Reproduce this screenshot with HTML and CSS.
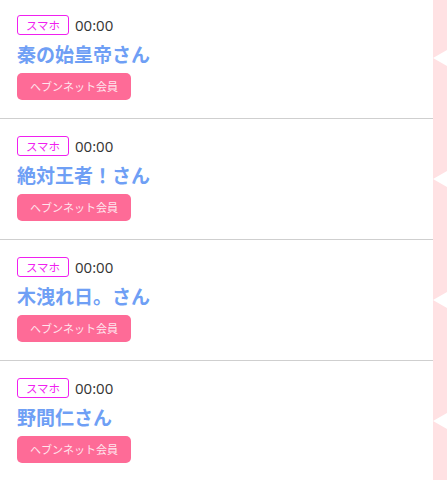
FILE: index.html
```html
<!DOCTYPE html>
<html lang="ja">
<head>
    <meta charset="UTF-8">
    <meta name="viewport" content="width=device-width, initial-scale=1.0">
    <title>メンバー一覧</title>
    <link rel="stylesheet" href="styles.css">
</head>
<body>
    <div class="list">
        <div class="row">
            <div class="item">
                <div class="meta"><span class="device">スマホ</span><span class="time">00:00</span></div>
                <div class="name">秦の始皇帝さん</div>
                <span class="member-btn">ヘブンネット会員</span>
            </div>
            <div class="side"><span class="notch"></span></div>
        </div>
        <div class="row">
            <div class="item">
                <div class="meta"><span class="device">スマホ</span><span class="time">00:00</span></div>
                <div class="name">絶対王者！さん</div>
                <span class="member-btn">ヘブンネット会員</span>
            </div>
            <div class="side"><span class="notch"></span></div>
        </div>
        <div class="row">
            <div class="item">
                <div class="meta"><span class="device">スマホ</span><span class="time">00:00</span></div>
                <div class="name">木洩れ日。さん</div>
                <span class="member-btn">ヘブンネット会員</span>
            </div>
            <div class="side"><span class="notch"></span></div>
        </div>
        <div class="row">
            <div class="item">
                <div class="meta"><span class="device">スマホ</span><span class="time">00:00</span></div>
                <div class="name">野間仁さん</div>
                <span class="member-btn">ヘブンネット会員</span>
            </div>
            <div class="side"><span class="notch"></span></div>
        </div>
    </div>
</body>
</html>
```

FILE: styles.css
```css
body {
    font-family: "Noto Sans CJK JP", "Noto Sans", sans-serif;
    background-color: white;
    margin: 0;
    overflow: hidden;
}
.list {
    margin-top: -2.5px;
}
.row {
    display: flex;
}
.item {
    flex: 1;
    padding: 17.5px 0 17.5px 17px;
    border-bottom: 1px solid #cfcfcf;
    height: 85px;
}
.meta {
    display: flex;
    align-items: center;
    height: 20px;
}
.device {
    box-sizing: border-box;
    width: 52px;
    height: 20px;
    border: 1px solid #f020f0;
    border-radius: 3px;
    color: #f020f0;
    font-size: 11.5px;
    line-height: 18px;
    text-align: center;
}
.time {
    margin-left: 6px;
    font-family: "Open Sans", "Noto Sans", sans-serif;
    font-size: 15px;
    color: #333;
}
.name {
    margin-top: 6px;
    font-size: 19px;
    font-weight: bold;
    line-height: 26px;
    color: #6f9ff5;
}
.member-btn {
    display: inline-block;
    margin-top: 6px;
    width: 114px;
    height: 27px;
    border-radius: 5px;
    background-color: #fe6b97;
    color: #ffe6ee;
    font-size: 11px;
    line-height: 27px;
    text-align: center;
}
.side {
    width: 14px;
    background-color: #ffe1e3;
    display: flex;
    align-items: center;
    justify-content: flex-end;
}
.notch {
    width: 0;
    height: 0;
    border-top: 8.5px solid transparent;
    border-bottom: 8.5px solid transparent;
    border-right: 14px solid white;
}
```
